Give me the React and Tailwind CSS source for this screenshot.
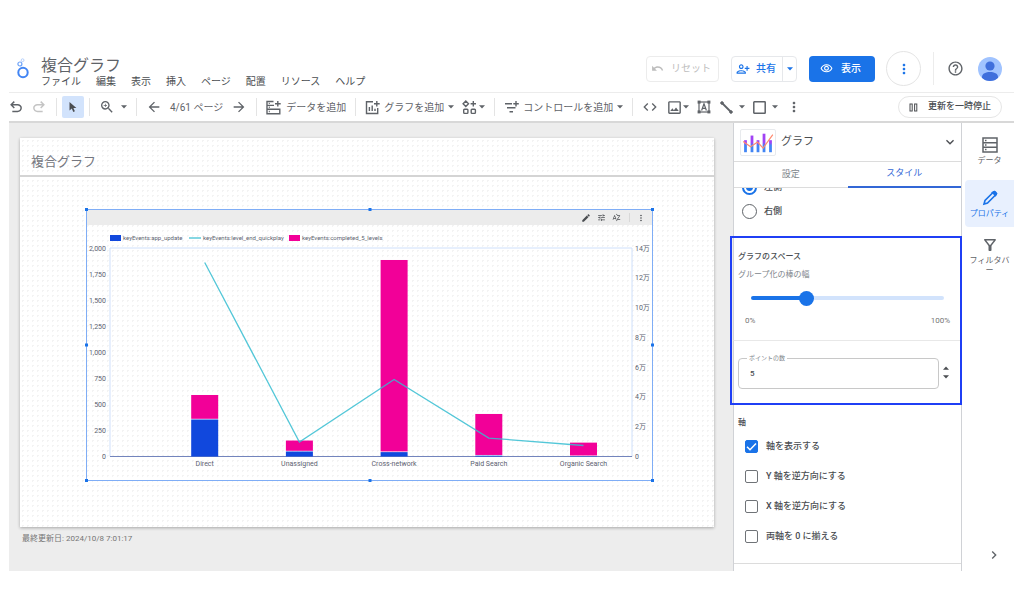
import React, { useState } from "react";
import {
  MdArrowBack,
  MdArrowForward,
  MdChevronRight,
  MdCode,
  MdEdit,
  MdExpandMore,
  MdHelpOutline,
  MdMoreVert,
  MdOutlineFilterAlt,
  MdOutlineImage,
  MdOutlinePersonAddAlt1,
  MdOutlineVisibility,
  MdSortByAlpha,
  MdTune,
  MdUndo,
  MdZoomIn,
} from "react-icons/md";

const MENU = ["ファイル", "編集", "表示", "挿入", "ページ", "配置", "リソース", "ヘルプ"];

const CHART_DATA = [
  { name: "Direct", update: 355, levels: 235, quickplay: 13.03 },
  { name: "Unassigned", update: 48, levels: 105, quickplay: 0.97 },
  { name: "Cross-network", update: 42, levels: 1843, quickplay: 5.17 },
  { name: "Paid Search", update: 8, levels: 400, quickplay: 1.24 },
  { name: "Organic Search", update: 3, levels: 130, quickplay: 0.74 },
];

const LEFT_TICKS = [0, 250, 500, 750, 1000, 1250, 1500, 1750, 2000];
const RIGHT_TICKS = [0, 2, 4, 6, 8, 10, 12, 14];

function App() {
  return (
    <div className="flex h-screen min-w-[1000px] flex-col bg-white pt-[45px] pr-[10px] pb-[43px] pl-[9px] font-[Roboto,'Noto_Sans_CJK_JP',sans-serif] text-[#5f6368]">
      <Header />
      <Toolbar />
      <main className="flex min-h-0 flex-1 overflow-hidden">
        <Canvas />
        <PropertyPanel />
        <SideRail />
      </main>
    </div>
  );
}

function Header() {
  return (
    <header className="flex h-12 shrink-0 items-center border-b border-[#ececec]">
      <Logo />
      <div className="ml-[11px] pt-2">
        <h1 className="text-[16px] leading-[18px] text-[#5f6368]">複合グラフ</h1>
        <nav className="flex gap-[15px]">
          {MENU.map((item) => (
            <button key={item} className="text-[10px] leading-[14px] text-[#4a4d51]">
              {item}
            </button>
          ))}
        </nav>
      </div>

      <div className="ml-auto flex items-center">
        <button className="flex h-[26px] items-center gap-[7px] rounded-sm border border-[#ececec] pr-[7px] pl-1 text-[10px] text-[#bdbdbd]">
          <MdUndo className="size-[13px]" />
          リセット
        </button>
        <div className="ml-3 flex h-[26px] rounded-sm border border-[#e6e8eb] text-[#1a73e8]">
          <button className="flex items-center gap-[6px] pr-[6px] pl-1 text-[10px] font-medium">
            <MdOutlinePersonAddAlt1 className="size-[14px]" />
            共有
          </button>
          <button aria-label="共有オプション" className="flex w-[14px] items-center justify-center border-l border-[#e6e8eb]">
            <Caret />
          </button>
        </div>
        <button className="ml-3 flex h-[26px] items-center gap-2 rounded-sm bg-[#1a73e8] pr-[14px] pl-[11px] text-[10px] font-medium text-white">
          <MdOutlineVisibility className="size-[13px]" />
          表示
        </button>
        <button aria-label="その他" className="ml-[11px] flex size-[35px] items-center justify-center rounded-full border border-[#e4e4e4] text-[#1a73e8]">
          <MdMoreVert className="size-4" />
        </button>
        <div className="ml-3 h-[33px] w-px bg-[#ececec]" />
        <button aria-label="ヘルプセンター" className="ml-[13px]">
          <MdHelpOutline className="size-[17px]" />
        </button>
        <button aria-label="アカウント" className="mr-3 ml-[14px]">
          <svg viewBox="0 0 24 24" className="size-6">
            <clipPath id="avatar">
              <circle cx="12" cy="12" r="12" />
            </clipPath>
            <g clipPath="url(#avatar)">
              <rect width="24" height="24" fill="#a0c3ff" />
              <circle cx="12" cy="9" r="4.600" fill="#3f6fdc" />
              <path d="M4 20c0-3.600 4-5 8-5s8 1.400 8 5v1.500a12 12 0 0 1-16 0z" fill="#3f6fdc" />
            </g>
          </svg>
        </button>
      </div>
    </header>
  );
}

function Logo() {
  return (
    <svg viewBox="0 0 14 21" className="ml-[7px] h-[21px] w-[14px]" fill="none">
      <circle cx="7" cy="14.500" r="4.700" stroke="#4285f4" strokeWidth="2" />
      <circle cx="3.900" cy="6" r="2" stroke="#6ea3f8" strokeWidth="1.200" />
      <circle cx="6.600" cy="2.200" r="1.400" stroke="#b4cffb" strokeWidth="1" />
    </svg>
  );
}

function Caret() {
  return (
    <svg viewBox="0 0 6 4" className="h-1 w-[6px]" fill="currentColor">
      <path d="M0 .3h6L3 3.600z" />
    </svg>
  );
}

// One block of toolbar tools with a divider on its right
function ToolGroup({ className, children }) {
  return <div className={`flex h-[18px] items-center border-r border-[#e4e4e4] ${className}`}>{children}</div>;
}

function Toolbar() {
  return (
    <div className="flex h-[30px] shrink-0 items-center border-b-2 border-[#d8d8d8] text-[10px] whitespace-nowrap">
      <ToolGroup className="gap-[9px] pr-[10px]">
        <button aria-label="元に戻す">
          <UndoIcon className="size-[14px]" />
        </button>
        <button aria-label="やり直す" className="text-[#c4c4c4]">
          <UndoIcon className="size-[14px] -scale-x-100" />
        </button>
      </ToolGroup>
      <ToolGroup className="px-[5px]">
        <button aria-label="選択" className="flex size-[22px] items-center justify-center rounded-xs bg-[#d2e3fc]">
          <svg viewBox="0 0 10 12" className="h-3 w-[10px]" fill="#4a4d51">
            <path d="M1.500 1v8.600l2.300-2 1.500 3.400 1.600-.7-1.500-3.300h3z" />
          </svg>
        </button>
      </ToolGroup>
      <ToolGroup className="px-[9px]">
        <button aria-label="ズーム" className="flex items-center gap-[6px]">
          <MdZoomIn className="size-4" />
          <Caret />
        </button>
      </ToolGroup>
      <ToolGroup className="gap-2 px-[9px]">
        <button aria-label="前のページ">
          <MdArrowBack className="size-4" />
        </button>
        <span>4/61 ページ</span>
        <button aria-label="次のページ">
          <MdArrowForward className="size-4" />
        </button>
      </ToolGroup>
      <ToolGroup className="px-[9px]">
        <button className="flex items-center gap-[5px]">
          <AddDataIcon />
          データを追加
        </button>
      </ToolGroup>
      <ToolGroup className="gap-2 px-[9px]">
        <button className="flex items-center gap-1">
          <AddChartIcon />
          グラフを追加
          <Caret />
        </button>
        <button aria-label="コミュニティ ビジュアリゼーション" className="flex items-center gap-[2px]">
          <CommunityIcon />
          <Caret />
        </button>
      </ToolGroup>
      <ToolGroup className="px-[9px]">
        <button className="flex items-center gap-1">
          <AddControlIcon />
          コントロールを追加
          <Caret />
        </button>
      </ToolGroup>
      <div className="flex items-center gap-2 pl-[9px]">
        <button aria-label="URL を埋め込む">
          <MdCode className="size-4" />
        </button>
        <button aria-label="画像" className="flex items-center">
          <MdOutlineImage className="size-[17px]" />
          <Caret />
        </button>
        <button aria-label="テキスト">
          <TextBoxIcon />
        </button>
        <button aria-label="線" className="ml-px flex items-center gap-[6px]">
          <svg viewBox="0 0 13 13" className="size-[13px]" stroke="currentColor" fill="currentColor">
            <path d="M2 2l9 9" strokeWidth="1.800" />
            <circle cx="2" cy="2" r="1.300" />
            <circle cx="11" cy="11" r="1.300" />
          </svg>
          <Caret />
        </button>
        <button aria-label="図形" className="flex items-center gap-[6px]">
          <svg viewBox="0 0 13 13" className="size-[13px]" stroke="currentColor" fill="none">
            <rect x=".8" y=".8" width="11.400" height="11.400" rx=".5" strokeWidth="1.500" />
          </svg>
          <Caret />
        </button>
        <button aria-label="その他のツール">
          <MdMoreVert className="size-4" />
        </button>
      </div>
      <button className="mr-3 ml-auto flex h-[22px] items-center gap-[10px] rounded-full border border-[#e6e6e6] px-[10px] text-[9px] font-medium text-[#4a4d51]">
        <svg viewBox="0 0 9 9" className="size-[9px]" fill="none" stroke="currentColor">
          <rect x="1" y="1" width="2.200" height="7" />
          <rect x="5.600" y="1" width="2.200" height="7" />
        </svg>
        更新を一時停止
      </button>
    </div>
  );
}

function UndoIcon({ className }) {
  return (
    <svg viewBox="100 -860 760 760" className={className} fill="currentColor">
      <path d="M280-200v-80h284q63 0 109.500-40T720-420q0-60-46.500-100T564-560H312l104 104-56 56-200-200 200-200 56 56-104 104h252q97 0 169.500 63T800-420q0 94-72.500 157T564-200H280Z" />
    </svg>
  );
}

function AddDataIcon() {
  return (
    <svg viewBox="0 0 15 15" className="size-[15px]" fill="none" stroke="currentColor" strokeWidth="1.400">
      <path d="M7.500 1.500H1v12.300h12.800V9.300H1M1 5.400h7M11.800 1v5.500M9 3.800h5.700" />
      <path d="M2.800 3.400h1M2.800 7.300h1M2.800 11.500h1" />
    </svg>
  );
}

function AddChartIcon() {
  return (
    <svg viewBox="0 0 15 15" className="size-[15px]" fill="none" stroke="currentColor" strokeWidth="1.400">
      <path d="M8 1.800H1.500v11.700h11.200V8M11.800 1v5.500M9 3.800h5.700" />
      <path d="M4.400 7v4M7.200 5.500V11M10 8.800V11" />
    </svg>
  );
}

function CommunityIcon() {
  return (
    <svg viewBox="0 0 15 15" className="size-[15px]" fill="none" stroke="currentColor" strokeWidth="1.400">
      <path d="M3.800 1l2.700 2.700-2.700 2.700L1.100 3.700zM11.300 1v5.400M8.600 3.700H14" />
      <rect x="1.700" y="9.200" width="4.200" height="4.200" rx=".8" />
      <rect x="9.200" y="9.200" width="4.200" height="4.200" rx=".8" />
    </svg>
  );
}

function AddControlIcon() {
  return (
    <svg viewBox="0 0 15 15" className="size-[15px]" fill="none" stroke="currentColor" strokeWidth="1.400">
      <path d="M1 3.800h7M12 1v5.500M9.300 3.800h5.500M3 7.800h8.500M5.500 11.800h3.500" />
    </svg>
  );
}

function TextBoxIcon() {
  return (
    <svg viewBox="0 0 14 14" className="size-[14px]" fill="none" stroke="currentColor">
      <rect x="2" y="2" width="10" height="10" strokeWidth="1.200" />
      <path d="M4.600 10.500L7 3.800l2.400 6.700M5.400 8.400h3.200" strokeWidth="1.200" />
      <g fill="currentColor" stroke="none">
        <rect x=".6" y=".6" width="3" height="3" />
        <rect x="10.400" y=".6" width="3" height="3" />
        <rect x=".6" y="10.400" width="3" height="3" />
        <rect x="10.400" y="10.400" width="3" height="3" />
      </g>
    </svg>
  );
}

function Canvas() {
  return (
    <section className="min-w-0 flex-1 bg-[#ededed] pt-[15px] pr-[19px] pl-[11px]">
      <div className="bg-white bg-[radial-gradient(#f3f3f3_1px,transparent_1px)] bg-size-[5px_5px] pb-[46px] shadow-[0_1px_3px_rgba(0,0,0,0.3)]">
        <h2 className="border-b-2 border-[#d4d4d4] pt-[15px] pb-1 pl-[11px] text-[13px] leading-[18px] text-[#757780]">
          複合グラフ
        </h2>
        <SelectedChart />
      </div>
      <p className="mt-[5px] pl-[2px] text-[8px] leading-[14px] text-[#757575]">最終更新日: 2024/10/8 7:01:17</p>
    </section>
  );
}

function SelectedChart() {
  const handle = "absolute size-[3px] bg-[#1a73e8]";
  return (
    <div className="relative mt-8 mr-[61px] ml-[66px] border border-[#7fadf6]">
      <div className="flex h-[15px] items-center justify-end gap-[6px] bg-[#ececec] pr-[6px] text-[#4a4d51]">
        <button aria-label="編集">
          <MdEdit className="size-[10px]" />
        </button>
        <button aria-label="調整">
          <MdTune className="size-[9px]" />
        </button>
        <button aria-label="並べ替え">
          <MdSortByAlpha className="size-[9px]" />
        </button>
        <div className="ml-[2px] h-[9px] w-px bg-[#d8d8d8]" />
        <button aria-label="グラフのメニュー">
          <MdMoreVert className="size-[10px]" />
        </button>
      </div>
      <ComboChart />
      <span className={`${handle} -top-[2px] -left-[2px]`} />
      <span className={`${handle} -top-[2px] left-1/2 -translate-x-1/2`} />
      <span className={`${handle} -top-[2px] -right-[2px]`} />
      <span className={`${handle} top-1/2 -left-[2px] -translate-y-1/2`} />
      <span className={`${handle} top-1/2 -right-[2px] -translate-y-1/2`} />
      <span className={`${handle} -bottom-[2px] -left-[2px]`} />
      <span className={`${handle} -bottom-[2px] left-1/2 -translate-x-1/2`} />
      <span className={`${handle} -right-[2px] -bottom-[2px]`} />
    </div>
  );
}

function ComboChart() {
  const left = 23;
  const right = 545;
  const top = 23;
  const bottom = 231.5;
  const barWidth = 27;
  const x = (i) => 117.7 + i * 94.7;
  const y = (v) => bottom - (v / 2000) * (bottom - top);
  const yRight = (v) => bottom - (v / 14) * (bottom - top);

  return (
    <svg viewBox="0 0 565 255" className="block w-full">
      <g fontSize="6" fill="#5c5f70">
        <rect x="23" y="10" width="11" height="6" fill="#1148dd" />
        <text x="36" y="15">keyEvents:app_update</text>
        <path d="M102 13h12" stroke="#35bdd1" strokeWidth="1.200" />
        <text x="116" y="15">keyEvents:level_end_quickplay</text>
        <rect x="202" y="10" width="11" height="6" fill="#f20098" />
        <text x="215" y="15">keyEvents:completed_5_levels</text>
      </g>

      <path d={`M${left} ${bottom}V${top}H${right}V${bottom}`} fill="none" stroke="#cfe0fb" />
      <path d={`M${left} ${bottom}H${right}`} stroke="#7385bd" />

      {CHART_DATA.map((d, i) => (
        <g key={d.name}>
          <rect x={x(i) - barWidth / 2} y={y(d.update)} width={barWidth} height={bottom - y(d.update)} fill="#1148dd" />
          <rect
            x={x(i) - barWidth / 2}
            y={y(d.update + d.levels)}
            width={barWidth}
            height={y(d.update) - y(d.update + d.levels) - 0.7}
            fill="#f20098"
          />
        </g>
      ))}
      <polyline
        points={CHART_DATA.map((d, i) => `${x(i)},${yRight(d.quickplay)}`).join(" ")}
        fill="none"
        stroke="#35bdd1"
        strokeWidth="1.300"
        strokeOpacity="0.85"
      />

      <g fontSize="7" fill="#5c5f70">
        {LEFT_TICKS.map((t) => (
          <text key={t} x="19" y={y(t) + 2.5} textAnchor="end">
            {t.toLocaleString("en-US")}
          </text>
        ))}
        {RIGHT_TICKS.map((t) => (
          <text key={t} x="548" y={yRight(t) + 2.5}>
            {t === 0 ? "0" : `${t}万`}
          </text>
        ))}
        {CHART_DATA.map((d, i) => (
          <text key={d.name} x={x(i)} y="241" textAnchor="middle">
            {d.name}
          </text>
        ))}
      </g>
    </svg>
  );
}

function PropertyPanel() {
  const [width, setWidth] = useState(27);
  const [points, setPoints] = useState("5");
  // The thumb is 15px wide, so its centre runs a little inside the track
  const fill = `calc(7px + (100% - 15px) * ${width / 100})`;

  return (
    <aside className="w-[229px] shrink-0 border-x border-[#d0d2d6] bg-white text-[#4a4d51]">
      <div className="flex h-[39px] items-center border-b border-[#dcdcdc] pr-[3px] pl-[6px]">
        <ComboIcon />
        <span className="ml-[5px] text-[11px]">グラフ</span>
        <button aria-label="グラフの種類" className="ml-auto">
          <MdExpandMore className="size-4" />
        </button>
      </div>

      <div className="flex h-[26px] text-[9px]">
        <button className="flex-1 border-b border-[#dcdcdc] text-[#80868b]">設定</button>
        <button className="flex-1 border-b-2 border-[#3367d6] text-[#3367d6]">スタイル</button>
      </div>

      <fieldset className="flex h-12 flex-col justify-end gap-[9px] overflow-hidden pb-[17px] pl-2 text-[9px] leading-[15px] font-medium">
        <Radio label="左側" defaultChecked />
        <Radio label="右側" />
      </fieldset>

      <section className="relative -mr-px -ml-1 border-2 border-[#1f3ff5]">
        <div className="ml-px h-[103px] border-b border-l border-b-[#e8e8e8] border-l-[#d0d2d6] pt-3 pl-1">
          <h3 className="text-[8px] leading-[14px] font-medium">グラフのスペース</h3>
          <label htmlFor="bar-width" className="mt-1 block text-[8px] leading-[14px] text-[#80868b]">
            グループ化の棒の幅
          </label>
          <div className="pt-[14px] pr-4 pl-[13px]">
            <input
              id="bar-width"
              type="range"
              min="0"
              max="100"
              value={width}
              onChange={(e) => setWidth(Number(e.target.value))}
              style={{ backgroundImage: `linear-gradient(to right, #1a73e8 ${fill}, #d2e3fc ${fill})` }}
              className="block h-1 w-full appearance-none rounded-full [&::-webkit-slider-thumb]:size-[15px] [&::-webkit-slider-thumb]:appearance-none [&::-webkit-slider-thumb]:rounded-full [&::-webkit-slider-thumb]:bg-[#1a73e8]"
            />
          </div>
          <div className="mt-[14px] flex justify-between pr-[10px] pl-[7px] text-[8px] leading-[14px] text-[#757575]">
            <span>0%</span>
            <span>100%</span>
          </div>
        </div>

        <div className="ml-px flex h-[62px] items-start gap-1 border-l border-[#d0d2d6] pt-[17px] pr-[11px] pl-1">
          <div className="relative flex-1">
            <label htmlFor="points" className="absolute -top-1 left-[9px] bg-white px-[2px] text-[6px] leading-[8px] text-[#80868b]">
              ポイントの数
            </label>
            <input
              id="points"
              type="text"
              inputMode="numeric"
              value={points}
              onChange={(e) => setPoints(e.target.value)}
              className="block h-[31px] w-full rounded-sm border border-[#c8c8c8] px-[11px] text-[8px] font-medium outline-none"
            />
          </div>
          <div className="flex flex-col gap-[5px] pt-2">
            <button aria-label="増やす" onClick={() => setPoints(String(Number(points) + 1))}>
              <span className="block rotate-180">
                <Caret />
              </span>
            </button>
            <button aria-label="減らす" onClick={() => setPoints(String(Number(points) - 1))}>
              <Caret />
            </button>
          </div>
        </div>
      </section>

      <section className="border-b border-[#dcdcdc] pt-[11px] pb-[19px] pl-1">
        <h3 className="text-[8px] leading-[14px] font-medium">軸</h3>
        <div className="mt-[9px] flex flex-col gap-[15px] pl-[7px] text-[9px] leading-[15px] font-medium">
          <Checkbox label="軸を表示する" defaultChecked />
          <Checkbox label="Y 軸を逆方向にする" />
          <Checkbox label="X 軸を逆方向にする" />
          <Checkbox label="両軸を 0 に揃える" />
        </div>
      </section>
    </aside>
  );
}

function Radio({ label, defaultChecked }) {
  return (
    <label className="flex items-center gap-[7px]">
      <input
        type="radio"
        name="axis-side"
        defaultChecked={defaultChecked}
        className="size-[15px] shrink-0 appearance-none rounded-full border border-[#5f6368] checked:border-2 checked:border-[#1a73e8] checked:bg-[radial-gradient(#1a73e8_3px,transparent_4px)]"
      />
      {label}
    </label>
  );
}

function Checkbox({ label, defaultChecked }) {
  return (
    <label className="flex items-center gap-2">
      <span className="relative size-[13px] shrink-0">
        <input
          type="checkbox"
          defaultChecked={defaultChecked}
          className="peer block size-[13px] appearance-none rounded-xs border border-[#6f7377] checked:border-[#1a73e8] checked:bg-[#1a73e8]"
        />
        <svg
          viewBox="0 0 13 13"
          className="pointer-events-none absolute inset-0 hidden size-[13px] peer-checked:block"
          fill="none"
          stroke="#fff"
          strokeWidth="1.500"
        >
          <path d="M2 6.800l3 3 6-6.300" />
        </svg>
      </span>
      {label}
    </label>
  );
}

function ComboIcon() {
  return (
    <svg viewBox="0 0 36 27" className="h-[27px] w-9 rounded-xs border border-[#e8eaed]">
      <defs>
        <linearGradient id="bars" x1="0" y1="0" x2="0" y2="27" gradientUnits="userSpaceOnUse">
          <stop offset="0.500" stopColor="#a142f4" />
          <stop offset="0.620" stopColor="#4285f4" />
        </linearGradient>
      </defs>
      <g fill="url(#bars)">
        <rect x="3" y="11" width="3" height="13" />
        <rect x="10" y="6" width="3" height="18" />
        <rect x="16.500" y="11" width="3" height="13" />
        <rect x="23" y="4" width="3" height="20" />
        <rect x="30" y="11" width="3" height="13" />
      </g>
      <path d="M2 12.500l8 5.500 7.500-5 6 6.500L34 5" fill="none" stroke="#ff8a70" strokeWidth="1.300" />
    </svg>
  );
}

function SideRail() {
  return (
    <nav className="flex w-[52px] shrink-0 flex-col items-end text-[8px] leading-[10px] text-[#5f6368]">
      <button className="flex w-[49px] flex-col items-center gap-[2px] pt-[13px] pb-[14px]">
        <svg viewBox="0 0 18 18" className="size-[18px]" fill="none" stroke="currentColor" strokeWidth="1.500">
          <path d="M2 2h14v14H2zM2 6.700h14M2 11.300h14" />
          <path d="M4 4.400h1.500M4 9h1.500M4 13.600h1.500" />
        </svg>
        データ
      </button>
      <button className="flex h-[47px] w-[49px] flex-col items-center justify-center gap-[2px] rounded-l-sm bg-[#e8f0fe] whitespace-nowrap text-[#1a73e8]">
        <svg viewBox="0 0 18 18" className="size-[18px]" fill="none" stroke="currentColor" strokeWidth="1.600">
          <path d="M3 15l1-3.500 8.500-8.500a1.300 1.300 0 0 1 1.800 0l.7.700a1.300 1.300 0 0 1 0 1.800L6.500 14z" />
          <path d="M11.500 3.500l3 3 1-1.800-2-2z" fill="currentColor" />
        </svg>
        プロパティ
      </button>
      <button className="flex w-[49px] flex-col items-center gap-[2px] px-[3px] pt-[9px]">
        <MdOutlineFilterAlt className="size-[18px]" />
        <span className="break-all">フィルタバー</span>
      </button>
      <button aria-label="パネルを閉じる" className="mt-auto mr-3 mb-2">
        <MdChevronRight className="size-4" />
      </button>
    </nav>
  );
}

export default App;
